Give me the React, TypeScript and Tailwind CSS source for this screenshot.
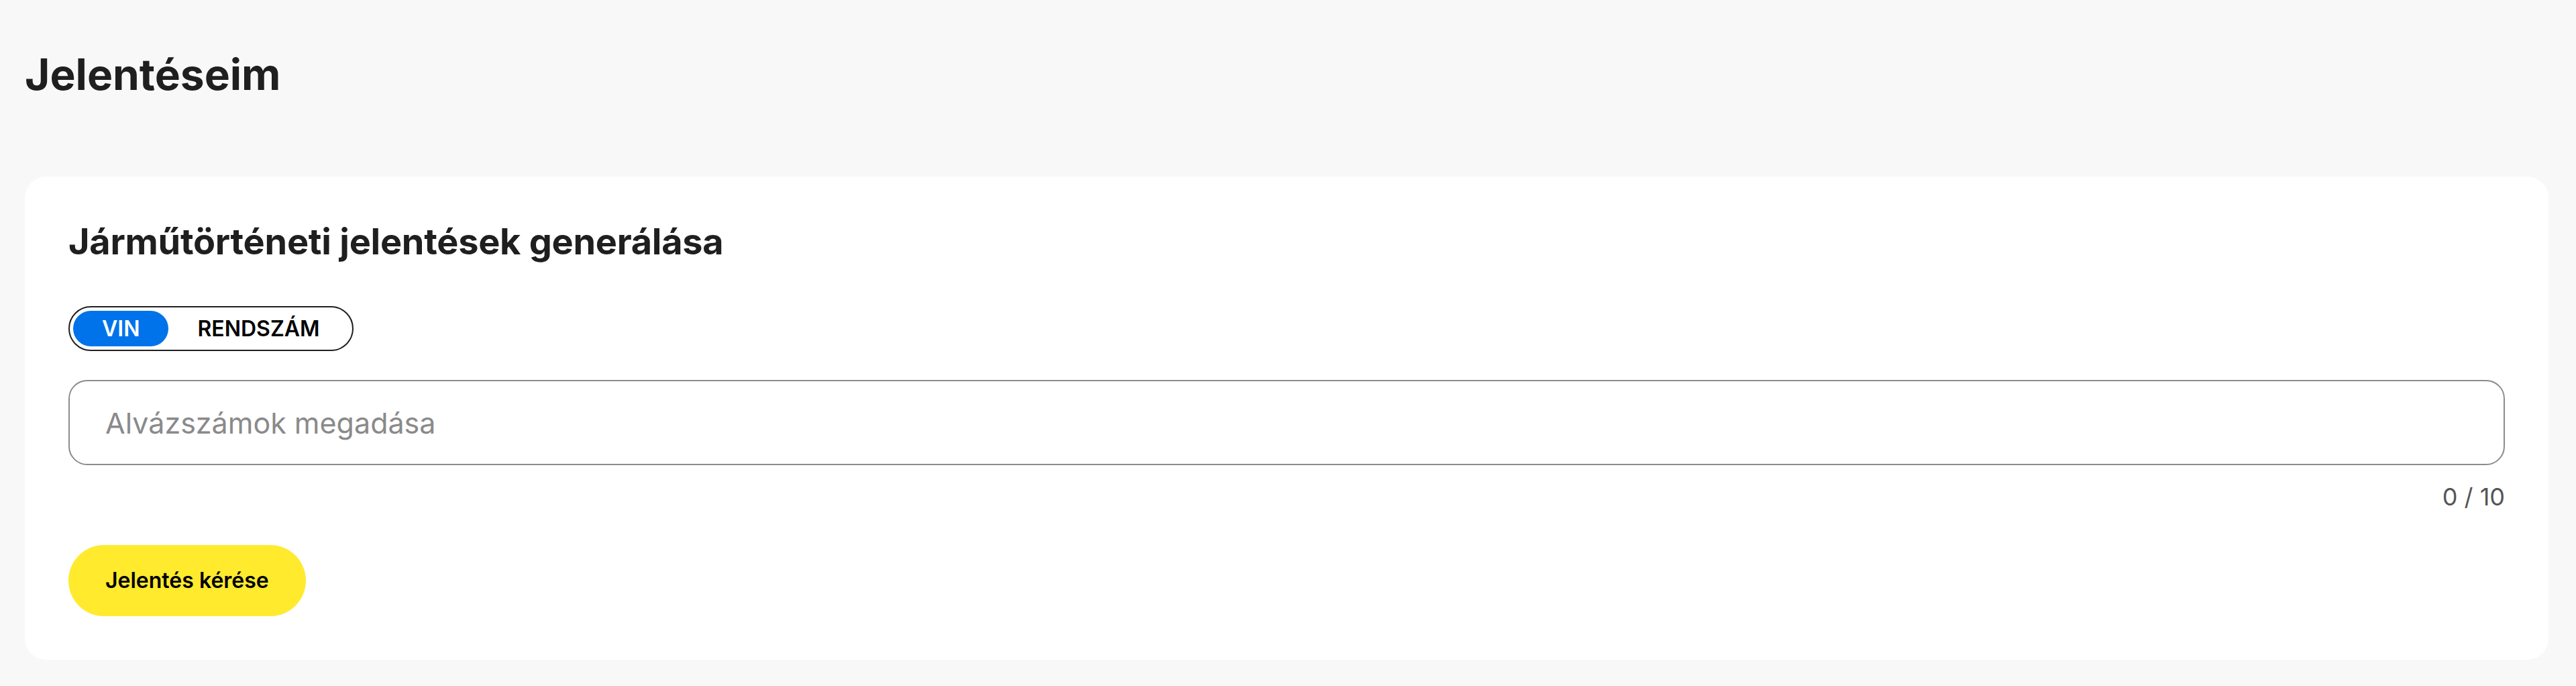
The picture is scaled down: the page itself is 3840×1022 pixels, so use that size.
import { useState } from "react";

export default function App() {
  const [mode, setMode] = useState<"vin" | "plate">("vin");
  const [value, setValue] = useState("");

  const count = value.split(/[\s,;]+/).filter(Boolean).length;

  return (
    <div className="min-h-screen bg-[#f8f8f8] pl-[37px] pr-[41px] pt-[79px] pb-[40px] font-[Inter,sans-serif] text-[#1f1f1f]">
      <h1 className="text-[64px] leading-[64px] font-bold">Jelentéseim</h1>

      {/* Report generator card */}
      <section className="mt-[120px] rounded-[32px] bg-white px-[65px] pt-[70px] pb-[65px]">
        <h2 className="text-[54px] leading-[54px] font-bold tracking-[-0.25px]">Járműtörténeti jelentések generálása</h2>

        <div className="mt-[69px] inline-flex rounded-full border-2 border-[#1f1f1f] p-[5px]">
          <button
            onClick={() => setMode("vin")}
            className={`h-[53px] rounded-full px-[43px] text-[32px] font-semibold leading-none ${
              mode === "vin" ? "bg-[#0073ea] text-white" : "bg-transparent text-black"
            }`}
          >
            VIN
          </button>
          <button
            onClick={() => setMode("plate")}
            className={`h-[53px] rounded-full px-[43px] text-[32px] font-semibold leading-none ${
              mode === "plate" ? "bg-[#0073ea] text-white" : "bg-transparent text-black"
            }`}
          >
            RENDSZÁM
          </button>
        </div>

        <input
          value={value}
          onChange={(e) => setValue(e.target.value)}
          placeholder={mode === "vin" ? "Alvázszámok megadása" : "Rendszámok megadása"}
          className="mt-[43px] block h-[127px] w-full rounded-[28px] border-2 border-[#8c8c8c] px-[53px] text-[43px] text-[#1f1f1f] outline-none placeholder:text-[#8a8a8a]"
        />
        <p className="mt-[29px] text-right text-[36px] leading-[36px] text-[#555555]">{count} / 10</p>

        <button className="mt-[54px] h-[106px] rounded-full bg-[#ffea2e] px-[55px] text-[32px] font-semibold text-black">
          Jelentés kérése
        </button>
      </section>
    </div>
  );
}
